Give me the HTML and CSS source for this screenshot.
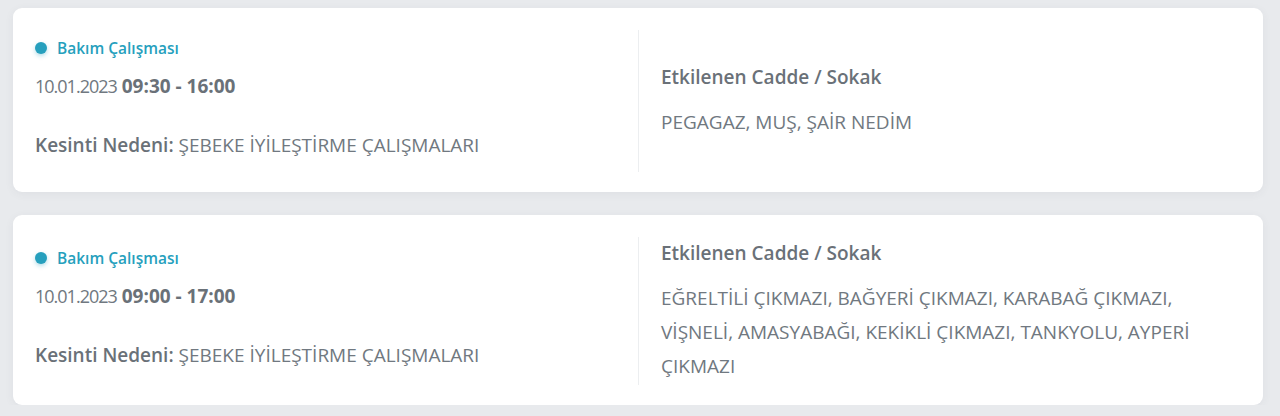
FILE: index.html
```html
<!DOCTYPE html>
<html lang="tr">
<head>
<meta charset="utf-8">
<title>Kesintiler</title>
<link rel="stylesheet" href="styles.css">
</head>
<body>
<div class="list">
  <div class="card">
    <div class="col info">
      <div class="info-inner">
        <div class="tag"><span class="dot"></span>Bakım Çalışması</div>
        <p class="date"><span class="day">10.01.2023</span> <b>09:30 - 16:00</b></p>
        <p class="reason"><b>Kesinti Nedeni:</b> ŞEBEKE İYİLEŞTİRME ÇALIŞMALARI</p>
      </div>
    </div>
    <div class="col streets">
      <div class="streets-inner">
        <h4 class="streets-title">Etkilenen Cadde / Sokak</h4>
        <p class="streets-list">PEGAGAZ, MUŞ, ŞAİR NEDİM</p>
      </div>
    </div>
  </div>
  <div class="card">
    <div class="col info">
      <div class="info-inner">
        <div class="tag"><span class="dot"></span>Bakım Çalışması</div>
        <p class="date"><span class="day">10.01.2023</span> <b>09:00 - 17:00</b></p>
        <p class="reason"><b>Kesinti Nedeni:</b> ŞEBEKE İYİLEŞTİRME ÇALIŞMALARI</p>
      </div>
    </div>
    <div class="col streets">
      <div class="streets-inner">
        <h4 class="streets-title">Etkilenen Cadde / Sokak</h4>
        <p class="streets-list">EĞRELTİLİ ÇIKMAZI, BAĞYERİ ÇIKMAZI, KARABAĞ ÇIKMAZI, VİŞNELİ, AMASYABAĞI, KEKİKLİ ÇIKMAZI, TANKYOLU, AYPERİ ÇIKMAZI</p>
      </div>
    </div>
  </div>
</div>
</body>
</html>
```
FILE: styles.css
```css
html, body {
  margin: 0;
  padding: 0;
  background: #e8eaed;
}
body {
  font-family: "Open Sans", "Noto Sans", sans-serif;
  color: #707880;
}
.list {
  padding: 8px 17px 0 13px;
  display: flex;
  flex-direction: column;
  gap: 23px;
}
.card {
  background: #ffffff;
  border-radius: 9px;
  box-shadow: 0 2px 10px rgba(60, 70, 80, 0.06);
  padding: 22px 0 20px;
  display: grid;
  grid-template-columns: 1fr 1fr;
}
.col {
  min-height: 142px;
  display: flex;
  flex-direction: column;
  justify-content: center;
}
.info {
  padding-left: 22px;
}
.info-inner {
  padding: 0 0 8px;
}
.tag {
  display: flex;
  align-items: center;
  height: 20px;
  font-weight: 600;
  font-size: 15.5px;
  color: #269fbd;
}
.dot {
  width: 12px;
  height: 12px;
  border-radius: 50%;
  background: #269fbd;
  margin-right: 10px;
  box-shadow: 0 2px 4px rgba(38, 159, 189, 0.35);
}
.date {
  margin: 16px 0 0;
  font-size: 19px;
  line-height: 24px;
}
.day {
  font-size: 18px;
  letter-spacing: -1px;
}
.date b {
  font-weight: 700;
  color: #6a7178;
}
.reason b {
  font-weight: 600;
  color: #6a7178;
}
.reason {
  margin: 35px 0 0;
  font-size: 19px;
  line-height: 24px;
}
.streets {
  border-left: 1px solid #eceef0;
  padding-left: 22px;
}
.streets-inner {
  padding: 4px 0 2px;
}
.streets-title {
  margin: 0 0 16px;
  font-size: 19px;
  line-height: 24px;
  font-weight: 600;
  color: #6a7178;
}
.streets-list {
  margin: 0;
  max-width: 555px;
  font-size: 19px;
  line-height: 34px;
}
```
